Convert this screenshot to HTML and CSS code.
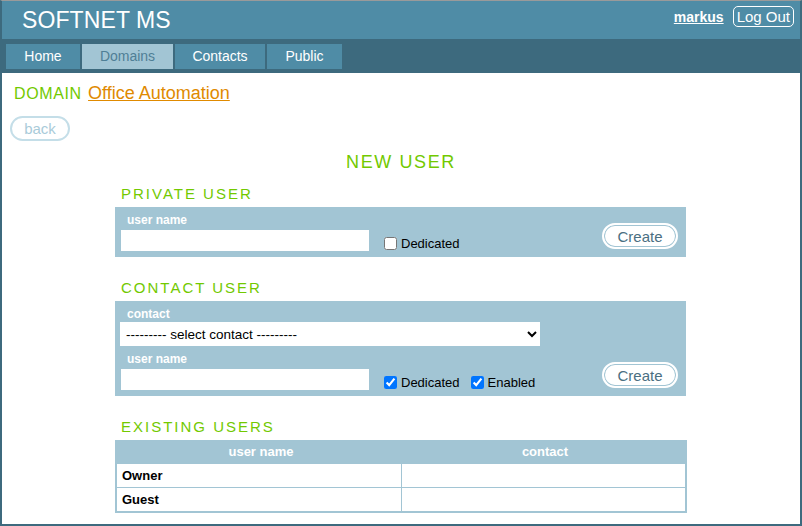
FILE: index.html
```html
<!DOCTYPE html>
<html>
<head>
<meta charset="utf-8">
<title>SOFTNET MS</title>
<link rel="stylesheet" href="styles.css">
</head>
<body>
<div class="page">
  <header class="header">
    <div class="brand">SOFTNET MS</div>
    <div class="account">
      <a class="user-link" href="#">markus</a>
      <button class="logout">Log Out</button>
    </div>
  </header>
  <nav class="nav">
    <a class="tab" href="#">Home</a>
    <a class="tab active" href="#">Domains</a>
    <a class="tab" href="#">Contacts</a>
    <a class="tab" href="#">Public</a>
  </nav>
  <div class="domain-line"><span class="domain-label">DOMAIN</span> <a class="domain-link" href="#">Office Automation</a></div>
  <button class="back">back</button>
  <h1 class="title">NEW USER</h1>
  <div class="content">
    <h2 class="section">PRIVATE USER</h2>
    <div class="box">
      <div class="row">
        <div class="field">
          <div class="label">user name</div>
          <input class="text" type="text">
        </div>
        <label class="check"><input type="checkbox">Dedicated</label>
        <button class="create">Create</button>
      </div>
    </div>

    <h2 class="section">CONTACT USER</h2>
    <div class="box">
      <div class="label">contact</div>
      <select class="select"><option>--------- select contact ---------</option></select>
      <div class="row">
        <div class="field">
          <div class="label">user name</div>
          <input class="text" type="text">
        </div>
        <label class="check"><input type="checkbox" checked>Dedicated</label>
        <label class="check"><input type="checkbox" checked>Enabled</label>
        <button class="create">Create</button>
      </div>
    </div>

    <h2 class="section">EXISTING USERS</h2>
    <table class="users">
      <thead><tr><th>user name</th><th>contact</th></tr></thead>
      <tbody>
        <tr><td>Owner</td><td></td></tr>
        <tr><td>Guest</td><td></td></tr>
      </tbody>
    </table>
  </div>
</div>
</body>
</html>
```
FILE: styles.css
```css
html, body {
  margin: 0;
  padding: 0;
  background: #fff;
}
body {
  font-family: "Liberation Sans", Arial, sans-serif;
}
.page {
  width: 802px;
  height: 526px;
  box-sizing: border-box;
  border: 2px solid #3d6a7e;
  border-top: 1px solid #9a9a9a;
  overflow: hidden;
}
.header {
  height: 38px;
  background: #4f8ca6;
  display: flex;
  justify-content: space-between;
  align-items: flex-start;
}
.brand {
  color: #fff;
  font-size: 23px;
  line-height: 38px;
  padding-left: 20px;
  letter-spacing: 0.1px;
}
.account {
  display: flex;
  align-items: center;
  gap: 9px;
  padding-top: 5px;
  padding-right: 6px;
}
.user-link {
  color: #fff;
  font-weight: bold;
  font-size: 14px;
}
.logout {
  font-family: "Liberation Sans", Arial, sans-serif;
  background: transparent;
  color: #fff;
  border: 1px solid #fff;
  border-radius: 5px;
  font-size: 15px;
  height: 21px;
  padding: 0 3px;
  line-height: 18px;
}
.nav {
  height: 34px;
  background: #3d6a7e;
  display: flex;
  gap: 2px;
  padding: 5px 0 0 4px;
  box-sizing: border-box;
}
.tab {
  height: 25px;
  line-height: 25px;
  background: #4f8ca6;
  color: #fff;
  font-size: 14px;
  text-decoration: none;
  text-align: center;
}
.tab:nth-child(1) { width: 74px; }
.tab:nth-child(2) { width: 91px; }
.tab:nth-child(3) { width: 90px; }
.tab:nth-child(4) { width: 75px; }
.tab.active {
  background: #a2c5d4;
  color: #4f7f96;
}
.domain-line {
  margin-top: 10px;
  padding-left: 12px;
  line-height: 20px;
}
.domain-label {
  color: #72c900;
  font-size: 16px;
  letter-spacing: 0.6px;
}
.domain-link {
  color: #e08a00;
  font-size: 18px;
  margin-left: 2px;
}
.back {
  display: block;
  margin: 12px 0 0 8px;
  width: 60px;
  height: 25px;
  border: 2px solid #c4dee8;
  border-radius: 13px;
  background: #fff;
  color: #a9cbd9;
  font-family: "Liberation Sans", Arial, sans-serif;
  font-size: 15px;
  padding: 0;
}
.title {
  margin: 10px 0 0 0;
  text-align: center;
  color: #72c900;
  font-size: 18px;
  font-weight: normal;
  letter-spacing: 1.6px;
  line-height: 22px;
}
.content {
  width: 572px;
  margin: 0 0 0 113px;
}
.section {
  margin: 12px 0 4px 0;
  padding-left: 6px;
  color: #72c900;
  font-size: 15px;
  font-weight: normal;
  letter-spacing: 2px;
  line-height: 18px;
}
.box ~ .section {
  margin-top: 22px;
}
.box {
  width: 571px;
  box-sizing: border-box;
  background: #a2c5d4;
  padding: 6px 8px 6px 6px;
}
.label {
  color: #fff;
  font-size: 12px;
  font-weight: bold;
  padding-left: 6px;
  line-height: 14px;
  margin-bottom: 3px;
}
.select {
  display: block;
  width: 420px;
  height: 24px;
  border: none;
  background: #fff;
  font-family: "Liberation Sans", Arial, sans-serif;
  font-size: 13.5px;
  color: #000;
  margin: -2px 0 6px -1px;
  padding: 0 2px;
}
.row {
  display: flex;
  align-items: flex-end;
}
.field {
  display: flex;
  flex-direction: column;
}
.text {
  width: 248px;
  height: 21px;
  border: none;
  padding: 0;
  margin: 0;
  background: #fff;
  box-sizing: border-box;
}
.check {
  display: flex;
  align-items: center;
  font-size: 13px;
  color: #000;
  margin-left: 9px;
  margin-bottom: 0;
}
.check input {
  margin: 0 4px 0 6px;
  width: 13px;
  height: 13px;
}
.check + .check {
  margin-left: 5px;
}
.create {
  margin-left: auto;
  margin-bottom: 2px;
  width: 76px;
  height: 26px;
  border-radius: 13px;
  background: #fff;
  border: 2px solid #fff;
  box-shadow: inset 0 0 0 1px #a2c5d4;
  color: #4a6f82;
  font-family: "Liberation Sans", Arial, sans-serif;
  font-size: 15px;
  padding: 0;
}
.users {
  width: 572px;
  border-collapse: collapse;
  border: 2px solid #a2c5d4;
  border-top: none;
  font-size: 13px;
}
.users th {
  background: #a2c5d4;
  color: #fff;
  font-weight: bold;
  height: 23px;
  padding: 0 0 0 4px;
  width: 50%;
}
.users td {
  border: 1px solid #a2c5d4;
  height: 23px;
  padding: 0 5px;
  font-weight: bold;
  color: #000;
}
```
